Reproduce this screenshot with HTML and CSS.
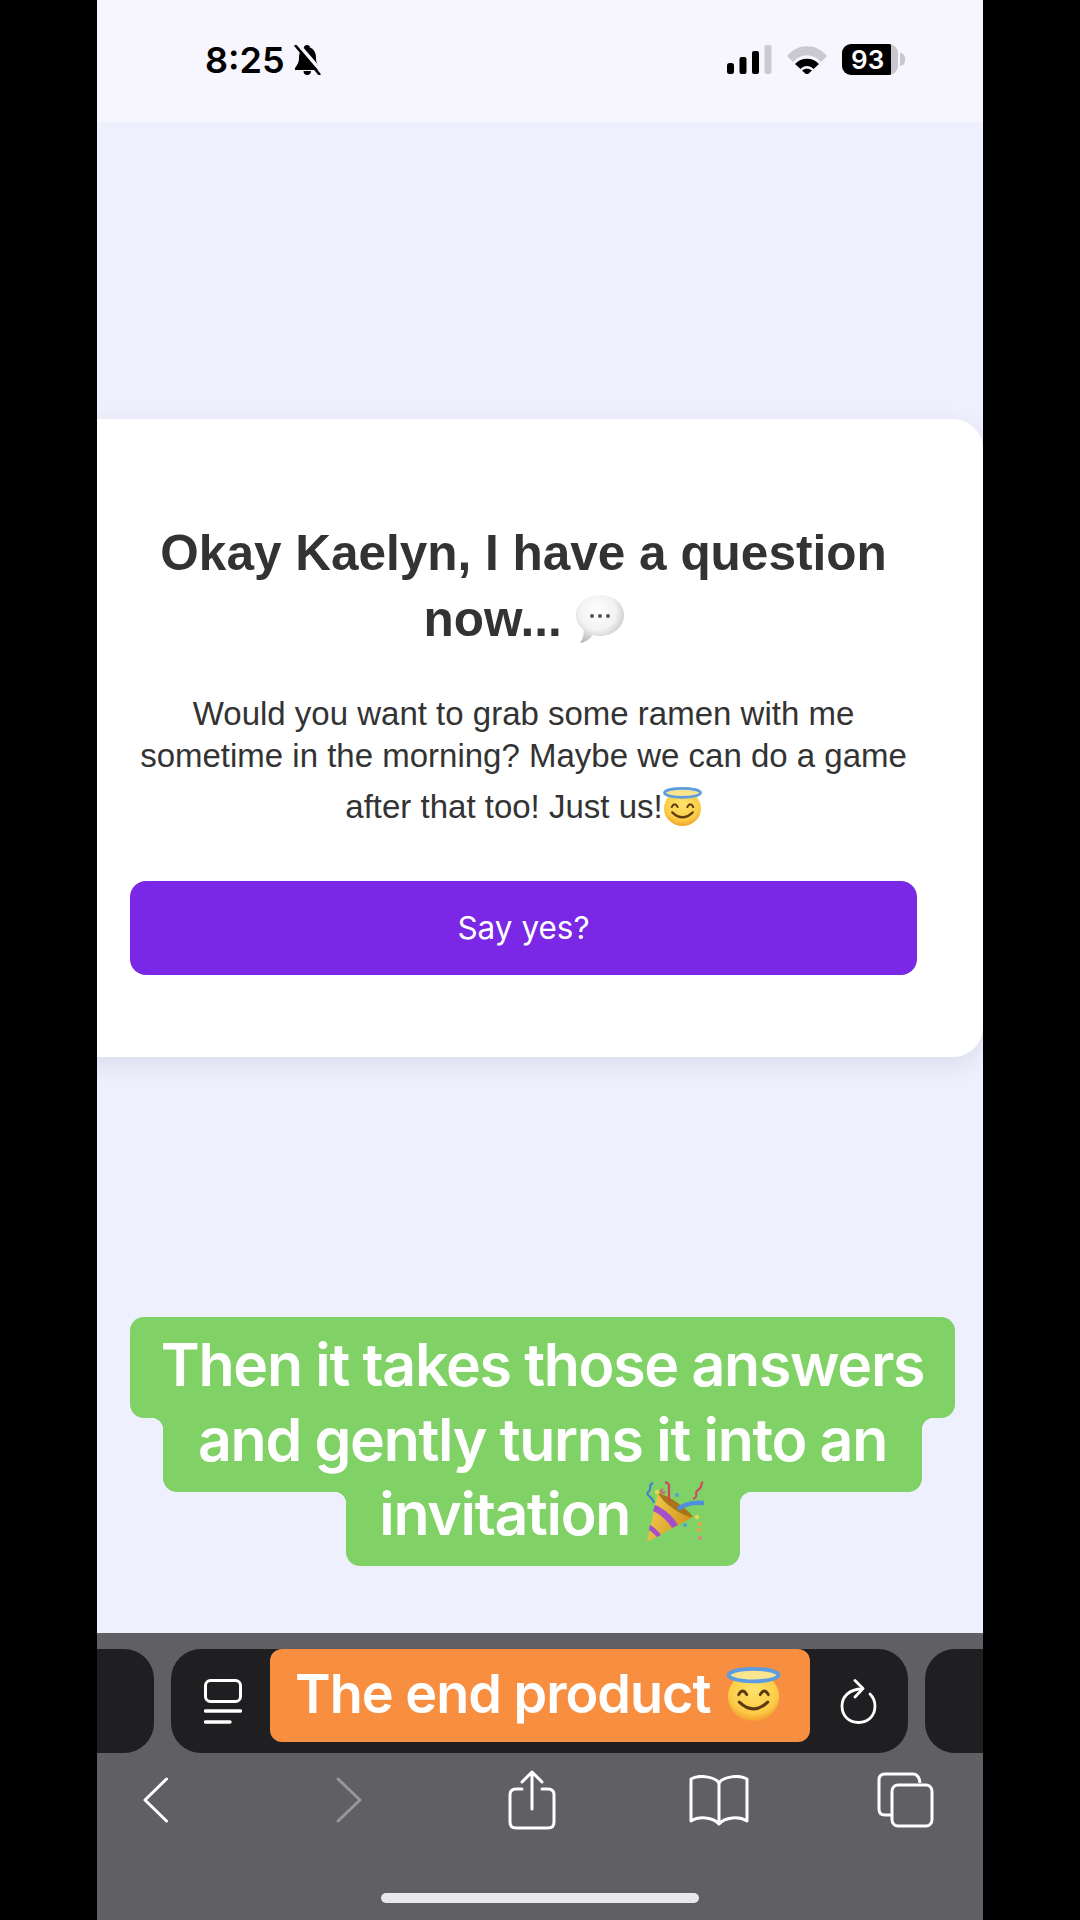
FILE: index.html
```html
<!DOCTYPE html>
<html>
<head>
  <meta charset="utf-8">
  <title>The end product</title>
  <link rel="stylesheet" href="styles.css">
</head>
<body>
  <!-- shared emoji drawings -->
  <svg class="defs" aria-hidden="true">
    <defs>
      <radialGradient id="faceFill" cx="50%" cy="35%" r="70%">
        <stop offset="0" stop-color="#ffe36b"/>
        <stop offset="0.7" stop-color="#fccb45"/>
        <stop offset="1" stop-color="#ee9526"/>
      </radialGradient>
      <radialGradient id="bubbleFill" cx="45%" cy="35%" r="70%">
        <stop offset="0" stop-color="#ffffff"/>
        <stop offset="0.55" stop-color="#f2f2f2"/>
        <stop offset="1" stop-color="#b4b4b4"/>
      </radialGradient>
      <linearGradient id="coneFill" x1="0" y1="0" x2="1" y2="0.4">
        <stop offset="0" stop-color="#f8d056"/>
        <stop offset="1" stop-color="#d2951f"/>
      </linearGradient>
      <symbol id="halo-face" viewBox="0 0 40 40">
        <ellipse cx="20" cy="22" rx="19" ry="18" fill="url(#faceFill)"/>
        <ellipse cx="20" cy="6" rx="18.500" ry="4.600" fill="#f9e48f" stroke="#5b9ce2" stroke-width="2.800"/>
        <path d="M9 20.500 Q12 15 15 20.500 M25 20.500 Q28 15 31 20.500" fill="none" stroke="#5c3a12" stroke-width="2.100" stroke-linecap="round"/>
        <path d="M9.500 26 Q20 36 30.500 26" fill="none" stroke="#5c3a12" stroke-width="2.300" stroke-linecap="round"/>
      </symbol>
      <symbol id="bubble" viewBox="0 0 48 48">
        <path d="M24 0 C38 0 48 9 48 20 C48 32 37 41 24 41 C21 41 19 40.500 17 40 C14 44 10 47 4 48 C7 44 8 40 7.500 35 C3 31 0 26 0 20 C0 9 10 0 24 0 Z" fill="url(#bubbleFill)"/>
        <circle cx="16" cy="21" r="2" fill="#555"/>
        <circle cx="24" cy="21" r="2" fill="#555"/>
        <circle cx="32" cy="21" r="2" fill="#555"/>
      </symbol>
      <symbol id="popper" viewBox="0 0 62 62">
        <path d="M14 12 C24 14 44 28 49 36 L3 61 Z" fill="url(#coneFill)"/>
        <path d="M14 12 C24 14 44 28 49 36 C42 37 20 24 14 12 Z" fill="#a8761a"/>
        <path d="M11 24 C19 27 29 35 34 44 L28 47 C24 40 16 33 9 30 Z" fill="#a34fc9"/>
        <path d="M6 44 C10 46 14 50 17 54 L13 56 C10 53 7 50 5 49 Z" fill="#a34fc9"/>
        <path d="M34 28 C42 22 50 21 60 22" fill="none" stroke="#4f8fdc" stroke-width="4.500"/>
        <path d="M25 20 L25 3 M25 3 L21 1" fill="none" stroke="#d8415f" stroke-width="2.200"/>
        <path d="M9 2 C3 4 9 8 4 11 C1 14 9 16 10 22" fill="none" stroke="#3f7fd0" stroke-width="2"/>
        <path d="M59 1 C55 3 60 6 54 9 C49 12 56 15 49 18" fill="none" stroke="#d8415f" stroke-width="2"/>
        <path d="M19 8 C15 10 17 13 21 11" fill="none" stroke="#d8607a" stroke-width="2"/>
        <circle cx="13" cy="11" r="2.200" fill="#e8d84c"/>
        <circle cx="33" cy="14" r="2" fill="#4f9fd8"/>
        <circle cx="53" cy="36" r="2.200" fill="#e8d84c"/>
        <circle cx="41" cy="44" r="2" fill="#4f9fd8"/>
        <circle cx="56" cy="43" r="2" fill="#e8a04c"/>
        <circle cx="55" cy="49" r="2" fill="#e8a04c"/>
        <circle cx="56" cy="57" r="2" fill="#e0808a"/>
      </symbol>
    </defs>
  </svg>

  <div class="phone">
    <header class="status-bar">
      <div class="status-left">
        <span class="clock">8:25</span>
        <svg class="bell" viewBox="0 0 29 30">
          <path d="M14 0 C16 0 17 1 17 2.500 C21 4 23 8 23 13 C23 18 25 20 27 23 L27 25 L2 25 L2 23 C4 20 6 18 6 13 C6 8 8 4 11 2.500 C11 1 12 0 14 0 Z M10.500 26 L18 26 C18 28.500 16.500 30 14.200 30 C12 30 10.500 28.500 10.500 26 Z" fill="#000"/>
          <path d="M5 -1 L30 28" stroke="#f7f5fe" stroke-width="3.500"/>
          <path d="M2 0 L27 30" stroke="#000" stroke-width="2.600"/>
        </svg>
      </div>
      <div class="status-right">
        <svg class="signal" viewBox="0 0 45 29">
          <rect x="0" y="18" width="7" height="11" rx="2.500" fill="#000"/>
          <rect x="12.500" y="12" width="7" height="17" rx="2" fill="#000"/>
          <rect x="25" y="6" width="7" height="23" rx="2" fill="#000"/>
          <rect x="37.500" y="0" width="7" height="29" rx="2" fill="#cbc9d0"/>
        </svg>
        <svg class="wifi" viewBox="0 0 40 28">
          <path d="M0 10 C11 -3 29 -3 40 10 L34 16 C26 7 14 7 6 16 Z" fill="#cbc9d0"/>
          <path d="M8 18 C14 11 26 11 32 18 L26.500 23 C23 19 17 19 13.500 23 Z" fill="#000"/>
          <path d="M15 24.500 C18 22 22 22 25 24.500 L20 29 Z" fill="#000"/>
        </svg>
        <div class="battery">93</div>
      </div>
    </header>

    <main class="page">
      <section class="card">
        <h1 class="card-title">Okay Kaelyn, I have a question now... <svg class="emoji-bubble"><use href="#bubble"/></svg></h1>
        <p class="card-text">Would you want to grab some ramen with me sometime in the morning? Maybe we can do a game after that too! Just us!<svg class="emoji-halo"><use href="#halo-face"/></svg></p>
        <button class="say-yes">Say yes?</button>
      </section>

      <div class="caption">
        <div class="caption-line">Then it takes those answers</div>
        <div class="caption-line">and gently turns it into an</div>
        <div class="caption-line">invitation <svg class="emoji-popper"><use href="#popper"/></svg></div>
      </div>
    </main>

    <footer class="sheet">
      <div class="tabs">
        <div class="tab tab-side"></div>
        <div class="tab tab-main">
          <svg class="tab-icon" viewBox="0 0 38 45" fill="none" stroke="#fff" stroke-width="3" stroke-linecap="round">
            <rect x="1.500" y="1.500" width="35" height="21" rx="5"/>
            <path d="M1.500 32 H36.500 M1.500 43 H26" stroke-width="3.400"/>
          </svg>
          <svg class="reload-icon" viewBox="0 0 37 45" fill="none" stroke="#fff" stroke-width="2.800" stroke-linecap="round" stroke-linejoin="round">
            <path d="M22 10 C9 10 2 18 2 27 C2 37 9 43.500 18.500 43.500 C28 43.500 35 37 35 27 C35 22 33 18 30 15"/>
            <path d="M15 1.500 L23 9.500 L15 18"/>
          </svg>
        </div>
        <div class="tab tab-side"></div>
      </div>

      <div class="end-tag">The end product <svg class="emoji-halo-big"><use href="#halo-face"/></svg></div>

      <nav class="toolbar">
        <svg class="tool tool-back" viewBox="0 0 25 46" fill="none" stroke="#fff" stroke-width="3" stroke-linecap="round" stroke-linejoin="round">
          <path d="M23.500 2 L2 23 L23.500 44"/>
        </svg>
        <svg class="tool tool-forward" viewBox="0 0 26 46" fill="none" stroke="#97979b" stroke-width="3" stroke-linecap="round" stroke-linejoin="round">
          <path d="M2 2 L24 23 L2 44"/>
        </svg>
        <svg class="tool tool-share" viewBox="0 0 48 60" fill="none" stroke="#fff" stroke-width="3" stroke-linecap="round" stroke-linejoin="round">
          <path d="M14 19 H8 Q2 19 2 25 V52 Q2 58 8 58 H40 Q46 58 46 52 V25 Q46 19 40 19 H34"/>
          <path d="M24 39 V3 M14 12 L24 2 L34 12"/>
        </svg>
        <svg class="tool tool-book" viewBox="0 0 60 51" fill="none" stroke="#fff" stroke-width="3" stroke-linecap="round" stroke-linejoin="round">
          <path d="M30 8 C26 2 10 -1 2 4 V46 C10 41 24 42 30 49 C36 42 50 41 58 46 V4 C50 -1 34 2 30 8 Z"/>
          <path d="M30 8 V48"/>
        </svg>
        <svg class="tool tool-tabs" viewBox="0 0 57 56" fill="none" stroke="#fff" stroke-width="3" stroke-linejoin="round">
          <path d="M14 43 H8 Q2 43 2 37 V8 Q2 2 8 2 H36 Q42 2 43 11"/>
          <rect x="15" y="13" width="40" height="41" rx="6"/>
        </svg>
      </nav>

      <div class="home-bar"></div>
    </footer>
  </div>
</body>
</html>
```

FILE: styles.css
```css
body {
  margin: 0;
  background: #000;
  font-family: "Liberation Sans", Arial, sans-serif;
}
.defs {
  position: absolute;
  width: 0;
  height: 0;
}
.phone {
  position: relative;
  width: 886px;
  height: 1920px;
  margin: 0 auto;
  display: flex;
  flex-direction: column;
  overflow: hidden;
  background: #eef0fd;
}

/* status bar */
.status-bar {
  height: 122px;
  flex: none;
  box-sizing: border-box;
  display: flex;
  justify-content: space-between;
  align-items: center;
  padding: 0 77px 3px 108px;
  background: #f7f5fe;
}
.status-left {
  display: flex;
  align-items: center;
  gap: 8px;
}
.clock {
  font-family: Inter, sans-serif;
  font-size: 36px;
  font-weight: 600;
  color: #000;
}
.bell {
  width: 29px;
  height: 30px;
}
.status-right {
  display: flex;
  align-items: center;
}
.signal {
  width: 45px;
  height: 29px;
}
.wifi {
  width: 40px;
  height: 28px;
  margin-left: 15px;
}
.battery {
  position: relative;
  width: 56px;
  height: 31px;
  margin: 0 8px 0 15px;
  border-radius: 9px;
  background: linear-gradient(to right, #000 88%, #c9c7ce 88%);
  color: #fff;
  font-family: Inter, sans-serif;
  font-size: 26px;
  font-weight: 600;
  line-height: 31px;
  padding-left: 9px;
  box-sizing: border-box;
}
.battery::after {
  content: "";
  position: absolute;
  right: -7px;
  top: 9px;
  width: 5px;
  height: 13px;
  border-radius: 0 5px 5px 0;
  background: #c9c7ce;
}

/* page */
.page {
  flex: 1;
  position: relative;
}
.card {
  box-sizing: border-box;
  width: 919px;
  height: 638px;
  margin: 297px 0 0 -33px;
  padding: 101px 66px 0;
  background: #fff;
  border-radius: 30px;
  box-shadow: 0 8px 24px rgba(40, 40, 90, 0.09);
  text-align: center;
  color: #333;
}
.card-title {
  margin: 0;
  font-size: 49.5px;
  font-weight: 700;
  line-height: 66px;
}
.emoji-bubble {
  width: 48px;
  height: 48px;
  vertical-align: -7px;
}
.card-text {
  margin: 41px 0 0;
  font-size: 33px;
  line-height: 41.5px;
}
.emoji-halo {
  width: 39px;
  height: 39px;
  margin-top: 11px;
  vertical-align: -8px;
}
.say-yes {
  display: block;
  width: 787px;
  height: 94px;
  margin-top: 53px;
  border: none;
  border-radius: 16px;
  background: #7a28e6;
  color: #fff;
  font-family: Inter, sans-serif;
  font-size: 31.5px;
}

/* tiktok style caption over the page */
.caption {
  position: absolute;
  left: 33px;
  top: 1195px;
  width: 825px;
  display: flex;
  flex-direction: column;
  align-items: center;
  font-family: Inter, sans-serif;
  font-size: 59px;
  font-weight: 600;
  letter-spacing: -1.3px;
  color: #fff;
  white-space: nowrap;
}
.caption-line {
  position: relative;
  background: #80d166;
  border-radius: 14px;
  text-align: center;
}
.caption-line:nth-child(1) {
  width: 825px;
  height: 101px;
  line-height: 95px;
}
.caption-line:nth-child(2) {
  width: 759px;
  height: 74px;
  line-height: 43px;
  border-radius: 0 0 14px 14px;
}
.caption-line:nth-child(3) {
  width: 394px;
  height: 74px;
  line-height: 43px;
  border-radius: 0 0 14px 14px;
}
.caption-line:nth-child(n+2)::before,
.caption-line:nth-child(n+2)::after {
  content: "";
  position: absolute;
  top: 0;
  width: 12px;
  height: 12px;
}
.caption-line:nth-child(n+2)::before {
  left: -12px;
  background: radial-gradient(circle at 0 100%, transparent 12px, #80d166 12.5px);
}
.caption-line:nth-child(n+2)::after {
  right: -12px;
  background: radial-gradient(circle at 100% 100%, transparent 12px, #80d166 12.5px);
}
.emoji-popper {
  width: 62px;
  height: 62px;
  margin-top: -12px;
  vertical-align: -8px;
}

/* safari bottom bar */
.sheet {
  position: relative;
  height: 287px;
  flex: none;
  overflow: hidden;
  background: #5f5f64;
}
.tabs {
  display: flex;
  gap: 17px;
  margin: 16px 0 0 -63px;
}
.tab {
  flex: none;
  height: 104px;
  border-radius: 30px;
  background: #1f1f22;
}
.tab-side {
  width: 120px;
}
.tab-main {
  box-sizing: border-box;
  width: 737px;
  display: flex;
  justify-content: space-between;
  align-items: center;
  padding: 0 31px 0 33px;
}
.tab-icon {
  width: 38px;
  height: 45px;
}
.reload-icon {
  width: 37px;
  height: 45px;
}
.end-tag {
  position: absolute;
  left: 173px;
  top: 16px;
  box-sizing: border-box;
  width: 540px;
  height: 93px;
  padding: 0 0 4px 25px;
  display: flex;
  align-items: center;
  gap: 15px;
  background: #f78e40;
  border-radius: 12px;
  color: #fff;
  font-family: Inter, sans-serif;
  font-size: 54px;
  font-weight: 600;
  letter-spacing: -1px;
  white-space: nowrap;
}
.emoji-halo-big {
  width: 55px;
  height: 54px;
}
.toolbar {
  height: 60px;
  margin: 17px 0 0 46px;
  display: flex;
  align-items: center;
}
.tool-back {
  width: 25px;
  height: 46px;
}
.tool-forward {
  width: 26px;
  height: 46px;
  margin-left: 168px;
}
.tool-share {
  width: 48px;
  height: 60px;
  margin-left: 146px;
}
.tool-book {
  width: 60px;
  height: 51px;
  margin-left: 133px;
}
.tool-tabs {
  width: 57px;
  height: 56px;
  margin-left: 128px;
}
.home-bar {
  width: 318px;
  height: 10px;
  margin: 63px auto 0;
  border-radius: 5px;
  background: #e9e9eb;
}
```
